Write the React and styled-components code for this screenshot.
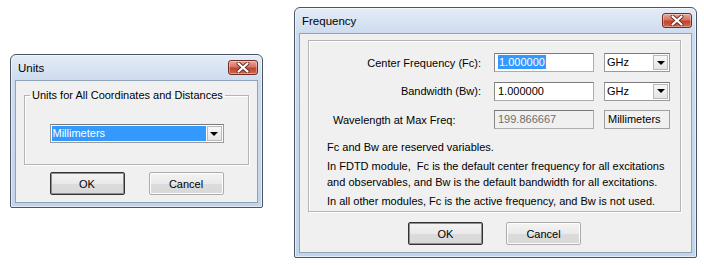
import styled, { createGlobalStyle } from 'styled-components'

const GlobalStyle = createGlobalStyle`
  html, body { margin: 0; padding: 0; background: #fff; }
  body { font-family: "Liberation Sans", Arial, sans-serif; font-size: 11px; color: #000; }
`

function CloseButton() {
  return (
    <CloseBtn>
      <svg width="14" height="11" viewBox="0 0 14 11">
        <path d="M2.5 1.5 L11.5 9.5 M11.5 1.5 L2.5 9.5" stroke="#6b2a22" strokeWidth="4" strokeLinecap="round" />
        <path d="M2.5 1.5 L11.5 9.5 M11.5 1.5 L2.5 9.5" stroke="#fff" strokeWidth="2.2" strokeLinecap="round" />
      </svg>
    </CloseBtn>
  )
}

function Dropdown({ value, selected, width }) {
  return (
    <Combo $w={width}>
      <ComboText $selected={selected}>{value}</ComboText>
      <ArrowBtn><Caret /></ArrowBtn>
    </Combo>
  )
}

export default function App() {
  return (
    <>
      <GlobalStyle />
      <Stage>
        <Window $w={253} $top={54}>
          <TitleBar>
            <Title>Units</Title>
            <CloseButton />
          </TitleBar>
          <Body $pad="8px 8px 7px 8px">
            <Group>
              <Legend>Units for All Coordinates and Distances</Legend>
              <Centered>
                <Dropdown value="Millimeters" selected width={174} />
              </Centered>
            </Group>
            <Buttons $gap={24} $top={7}>
              <Button $default>OK</Button>
              <Button>Cancel</Button>
            </Buttons>
          </Body>
        </Window>

        <Window $w={403} $top={7}>
          <TitleBar>
            <Title>Frequency</Title>
            <CloseButton />
          </TitleBar>
          <Body $pad="6px 10px 7px 8px">
            <Panel>
              <Rows>
                <Label>Center Frequency (Fc):</Label>
                <Field><Sel>1.000000</Sel></Field>
                <Dropdown value="GHz" width={66} />

                <Label>Bandwidth (Bw):</Label>
                <Field>1.000000</Field>
                <Dropdown value="GHz" width={66} />

                <Label $left>Wavelength at Max Freq:</Label>
                <Field $disabled>199.866667</Field>
                <Static>Millimeters</Static>
              </Rows>
              <Notes>
                <p>Fc and Bw are reserved variables.</p>
                <p>In FDTD module,&nbsp; Fc is the default center frequency for all excitations<br />and observables, and Bw is the default bandwidth for all excitations.</p>
                <p>In all other modules, Fc is the active frequency, and Bw is not used.</p>
              </Notes>
            </Panel>
            <Buttons $gap={23} $top={10}>
              <Button $default>OK</Button>
              <Button>Cancel</Button>
            </Buttons>
          </Body>
        </Window>
      </Stage>
    </>
  )
}

const Stage = styled.div`
  display: flex; align-items: flex-start; gap: 31px;
  padding-left: 10px;
`
const Window = styled.div`
  width: ${p => p.$w}px; margin-top: ${p => p.$top}px;
  box-sizing: border-box;
  border: 1px solid #4a5566; border-radius: 6px 6px 2px 2px;
  background: linear-gradient(#e4ecf7, #cddbee 26px, #c3d4ea);
  box-shadow: inset 0 0 0 1px rgba(255,255,255,0.55);
  padding: 0 4px 4px;
`
const TitleBar = styled.div`
  height: 25px; display: flex; align-items: center; justify-content: space-between;
  padding: 0 0 0 3px;
`
const Title = styled.div`
  font-size: 11.5px; color: #000; margin-top: 1px;
`
const CloseBtn = styled.div`
  width: 30px; height: 15px; box-sizing: border-box;
  border: 1px solid #6f2d24; border-radius: 3px;
  background: linear-gradient(#e8a898, #d77462 45%, #c0422e 55%, #d06a4e);
  box-shadow: inset 0 0 0 1px rgba(255,255,255,0.35);
  display: flex; align-items: center; justify-content: center;
`
const Body = styled.div`
  background: #f0f0f0; border: 1px solid #8fa3bb;
  padding: ${p => p.$pad};
  display: flex; flex-direction: column;
`
const Group = styled.fieldset`
  margin: 0; padding: 22px 0 21px; border: 1px solid #b4b4b4;
  box-shadow: 1px 1px 0 #fff, inset 1px 1px 0 #fff;
`
const Legend = styled.legend`
  padding: 0 2px; margin-left: 5px; font-size: 11px; line-height: 13px;
`
const Centered = styled.div`
  display: flex; justify-content: center;
`
const Panel = styled.div`
  border: 1px solid #b4b4b4; box-shadow: 1px 1px 0 #fff, inset 1px 1px 0 #fff;
  height: 172px; box-sizing: border-box;
  padding: 12px 0 0 18px;
`
const Rows = styled.div`
  display: grid; grid-template-columns: 157px 100px 66px;
  column-gap: 10px; row-gap: 9.5px; align-items: center;
`
const Label = styled.div`
  text-align: ${p => p.$left ? 'left' : 'right'};
  padding: ${p => p.$left ? '0 0 0 6px' : '0 3px 0 0'};
  white-space: nowrap;
`
const Field = styled.div`
  height: 19px; box-sizing: border-box; line-height: 17px;
  border: 1px solid #abadb3; border-top-color: #7a7a7a; border-left-color: #8a8a8a;
  background: ${p => p.$disabled ? '#f0f0f0' : '#fff'};
  color: ${p => p.$disabled ? '#6d6d6d' : '#000'};
  padding-left: 3px;
`
const Sel = styled.span`
  background: #3399ff; color: #fff; padding: 1px 1px;
`
const Combo = styled.div`
  width: ${p => p.$w}px; height: 19px; box-sizing: border-box;
  border: 1px solid #9a9a9a; border-top-color: #7a7a7a;
  background: #fff; padding: 1px;
  display: flex; align-items: stretch; gap: 1px;
`
const ComboText = styled.div`
  flex: 1; line-height: 15px; padding-left: 1px;
  background: ${p => p.$selected ? '#3399ff' : 'transparent'};
  color: ${p => p.$selected ? '#fff' : '#000'};
`
const ArrowBtn = styled.div`
  width: 15px; box-sizing: border-box;
  border: 1px solid #b9b9b9;
  background: linear-gradient(#f7f7f7, #e4e4e4);
  display: flex; align-items: center; justify-content: center;
`
const Caret = styled.span`
  width: 0; height: 0;
  border-left: 4px solid transparent; border-right: 4px solid transparent;
  border-top: 4px solid #000;
`
const Static = styled.div`
  height: 19px; box-sizing: border-box; line-height: 17px;
  border: 1px solid #a0a0a0; padding-left: 3px; background: #f0f0f0;
`
const Notes = styled.div`
  margin-top: 10px;
  p { margin: 0 0 3px; line-height: 16px; white-space: nowrap; }
`
const Buttons = styled.div`
  display: flex; justify-content: center; gap: ${p => p.$gap}px;
  margin-top: ${p => p.$top}px;
`
const Button = styled.div`
  width: 75px; height: 23px; box-sizing: border-box;
  display: flex; align-items: center; justify-content: center;
  border: 1px solid ${p => p.$default ? '#333' : '#adadad'};
  box-shadow: ${p => p.$default ? 'inset 0 0 0 1px #8e8e8e' : 'inset 0 0 0 1px #fcfcfc'};
  background: linear-gradient(#f4f4f4, #e9e9e9 50%, #dcdcdc 51%, #d8d8d8);
  border-radius: 2px;
`
